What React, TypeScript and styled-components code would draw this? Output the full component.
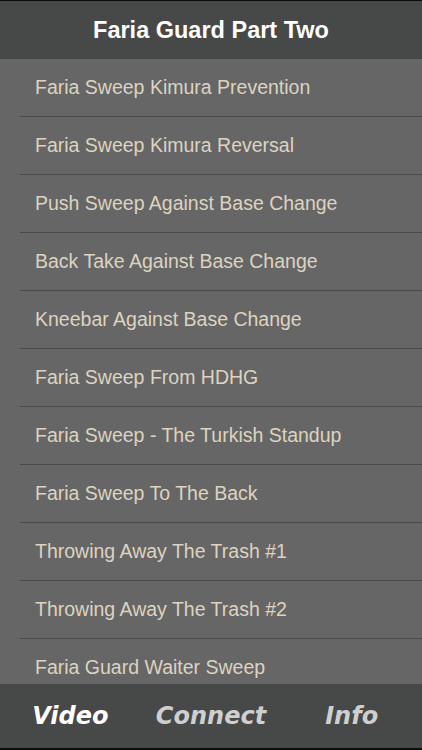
import React from 'react'
import styled, { createGlobalStyle } from 'styled-components'

const items = [
  'Faria Sweep Kimura Prevention',
  'Faria Sweep Kimura Reversal',
  'Push Sweep Against Base Change',
  'Back Take Against Base Change',
  'Kneebar Against Base Change',
  'Faria Sweep From HDHG',
  'Faria Sweep - The Turkish Standup',
  'Faria Sweep To The Back',
  'Throwing Away The Trash #1',
  'Throwing Away The Trash #2',
  'Faria Guard Waiter Sweep',
]

const tabs = ['Video', 'Connect', 'Info']

export default function App() {
  return (
    <>
      <GlobalStyle />
      <Screen>
        <Header>Faria Guard Part Two</Header>
        <List>
          {items.map(item => (
            <Row key={item}>{item}</Row>
          ))}
        </List>
        <TabBar>
          {tabs.map((tab, i) => (
            <Tab key={tab} active={i === 0}>
              {tab}
            </Tab>
          ))}
        </TabBar>
      </Screen>
    </>
  )
}

const GlobalStyle = createGlobalStyle`
  html, body {
    margin: 0;
    padding: 0;
    background: #000;
  }
`

const Screen = styled.div({
  width: 422,
  height: 750,
  display: 'flex',
  flexDirection: 'column',
  background: '#666666',
  borderTop: '1px solid #0c0c0c',
  borderBottom: '2px solid #0c0c0c',
  boxSizing: 'border-box',
  overflow: 'hidden',
})

const Header = styled.div({
  height: 58,
  flexShrink: 0,
  background: '#474848',
  color: '#ffffff',
  fontFamily: '"Liberation Sans", Arial, sans-serif',
  fontWeight: 700,
  fontSize: 23.5,
  display: 'flex',
  alignItems: 'center',
  justifyContent: 'center',
})

const List = styled.div({
  flex: 1,
  overflow: 'hidden',
  display: 'flex',
  flexDirection: 'column',
})

const Row = styled.div({
  height: 58,
  flexShrink: 0,
  marginLeft: 20,
  paddingLeft: 15,
  boxSizing: 'border-box',
  borderBottom: '1px solid #4a4a4a',
  display: 'flex',
  alignItems: 'center',
  color: '#ddd3c0',
  fontFamily: '"Liberation Sans", Arial, sans-serif',
  fontSize: 19.5,
})

const TabBar = styled.div({
  height: 64,
  flexShrink: 0,
  background: '#474848',
  display: 'grid',
  gridTemplateColumns: '1fr 1fr 1fr',
  alignItems: 'center',
  justifyItems: 'center',
})

const Tab = styled.div<{ active: boolean }>(
  {
    fontFamily: '"DejaVu Sans", sans-serif',
    fontWeight: 700,
    fontStyle: 'italic',
    fontSize: 24,
    letterSpacing: 0,
  },
  ({ active }) => ({ color: active ? '#ffffff' : '#cfcfcf' }),
)
